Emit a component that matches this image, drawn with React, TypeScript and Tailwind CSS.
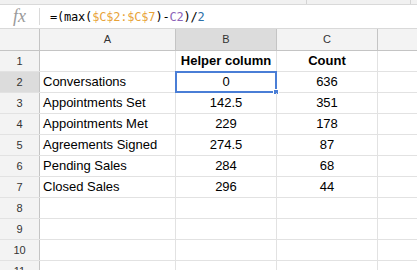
const ROWS: [string, string, string][] = [
    ["", "Helper column", "Count"],
    ["Conversations", "0", "636"],
    ["Appointments Set", "142.5", "351"],
    ["Appointments Met", "229", "178"],
    ["Agreements Signed", "274.5", "87"],
    ["Pending Sales", "284", "68"],
    ["Closed Sales", "296", "44"],
    ["", "", ""],
    ["", "", ""],
    ["", "", ""],
    ["", "", ""],
];

function App() {
    return (
        <div className="h-[270px] w-[417px] overflow-hidden bg-white font-['Liberation_Sans',Arial,sans-serif] text-[13px] text-black">
            {/* toolbar remnant */}
            <div className="flex h-[5px] border-b border-[#d9d9d9] bg-[#f1f1f1]">
                <div className="w-[307px] border-r border-[#d4d4d4]"></div>
                <div className="w-[104px] border-r border-[#d4d4d4]"></div>
            </div>

            {/* formula bar */}
            <div className="flex h-[24px] items-center border-b border-[#d9d9d9]">
                <div className="flex h-[17px] w-[40px] items-center justify-center border-r border-[#dadada] font-['Liberation_Serif',serif] text-[18px] italic text-[#9a9a9a]">
                    fx
                </div>
                <div className="pl-[10px] font-['DejaVu_Sans_Mono',monospace] text-[12px] tracking-[-0.2px]">
                    =(max(
                    <span className="text-[#e8a33a]">$C$2:$C$7</span>
                    )-<span className="text-[#8c63b8]">C2</span>)/
                    <span className="text-[#2d6fa8]">2</span>
                </div>
            </div>

            {/* column headers */}
            <div className="flex h-[22px] border-b border-[#c4c4c4] bg-[#f3f3f3] text-[11px] text-[#333]">
                <div className="w-[40px] border-r border-[#c4c4c4]"></div>
                <div className="flex w-[136px] items-center justify-center border-r border-[#c4c4c4]">A</div>
                <div className="flex w-[101px] items-center justify-center border-r border-[#c4c4c4] bg-[#dcdcdc]">B</div>
                <div className="flex w-[101px] items-center justify-center border-r border-[#c4c4c4]">C</div>
                <div className="flex-1"></div>
            </div>

            {/* rows */}
            {ROWS.map((row, i) => (
                <div key={i} className="flex h-[21px] border-b border-[#e2e2e2]">
                    <div
                        className={`flex w-[40px] shrink-0 items-center justify-center border-r border-[#c4c4c4] text-[11px] text-[#333] ${
                            i === 1 ? "bg-[#dcdcdc]" : "bg-[#f3f3f3]"
                        }`}
                    >
                        {i + 1}
                    </div>
                    <div className="flex w-[136px] shrink-0 items-center border-r border-[#e2e2e2] pl-[3px]">
                        {row[0]}
                    </div>
                    <div
                        className={`relative flex w-[101px] shrink-0 items-center justify-center border-r border-[#e2e2e2] ${
                            i === 0 ? "font-bold" : ""
                        }`}
                    >
                        {row[1]}
                        {i === 1 && (
                            <>
                                <div className="absolute -left-px -top-px bottom-[-1px] right-[-1px] border-2 border-[#4a7ed6]"></div>
                                <div className="absolute bottom-[-3px] right-[-3px] size-[6px] border border-white bg-[#4a7ed6]"></div>
                            </>
                        )}
                    </div>
                    <div
                        className={`flex w-[101px] shrink-0 items-center justify-center border-r border-[#e2e2e2] ${
                            i === 0 ? "font-bold" : ""
                        }`}
                    >
                        {row[2]}
                    </div>
                    <div className="flex-1"></div>
                </div>
            ))}
        </div>
    );
}

export default App;
